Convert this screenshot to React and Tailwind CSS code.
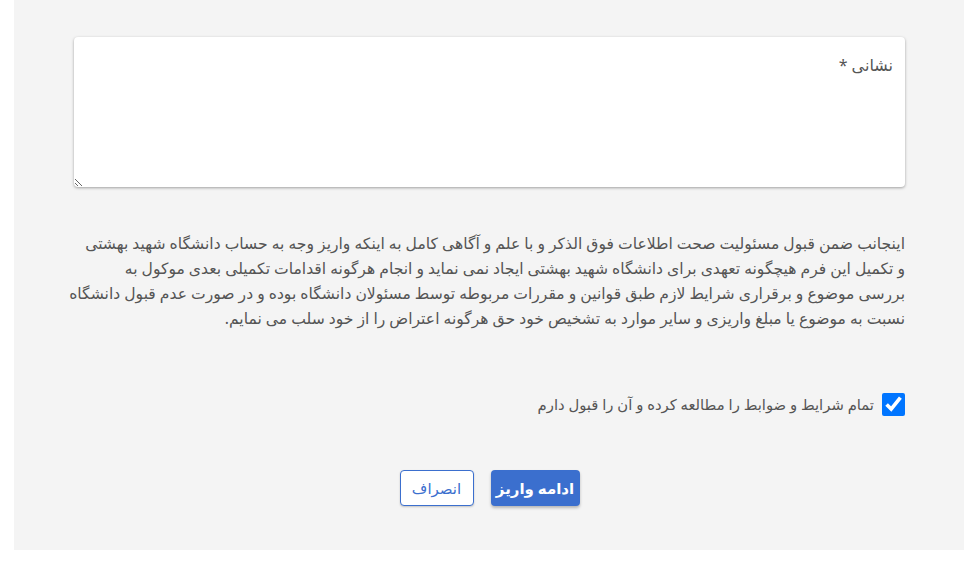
export default function App() {
  return (
    <div className="bg-white w-[975px] h-[562px] font-['Noto_Sans','DejaVu_Sans',sans-serif]" dir="rtl">
      <div className="mr-[11px] w-[950px] h-[550px] bg-[#f4f4f4] pt-[37px] pr-[59px] pl-[60px]">
        <textarea
          placeholder="نشانی *"
          className="block w-full h-[150px] bg-white rounded-[4px] shadow-[0_1px_3px_rgba(0,0,0,0.35)] pt-[16px] pr-[12px] text-[16px] text-[#444] placeholder:text-[#555] outline-none"
        />

        <p className="mt-[44px] text-[15.6px] leading-[25px] text-[#555] text-right whitespace-nowrap">
          اینجانب ضمن قبول مسئولیت صحت اطلاعات فوق الذکر و با علم و آگاهی کامل به اینکه واریز وجه به حساب دانشگاه شهید بهشتی
          <br />
          و تکمیل این فرم هیچگونه تعهدی برای دانشگاه شهید بهشتی ایجاد نمی نماید و انجام هرگونه اقدامات تکمیلی بعدی موکول به
          <br />
          بررسی موضوع و برقراری شرایط لازم طبق قوانین و مقررات مربوطه توسط مسئولان دانشگاه بوده و در صورت عدم قبول دانشگاه
          <br />
          نسبت به موضوع یا مبلغ واریزی و سایر موارد به تشخیص خود حق هرگونه اعتراض را از خود سلب می نمایم.
        </p>

        <label className="mt-[62px] flex items-center gap-[8px] text-[14.8px] text-[#555]">
          <input type="checkbox" defaultChecked className="w-[23px] h-[23px] m-0 accent-[#0075ff]" />
          <span>تمام شرایط و ضوابط را مطالعه کرده و آن را قبول دارم</span>
        </label>

        <div className="mt-[54px] flex justify-center gap-[17px]">
          <button className="w-[89px] h-[36px] rounded-[4px] bg-[#3b6fce] text-white text-[15px] font-bold shadow-[0_2px_3px_rgba(0,0,0,0.25)]">
            ادامه واریز
          </button>
          <button className="w-[74px] h-[36px] rounded-[4px] bg-white border border-[#3b6fce] text-[#3b6fce] text-[15px] shadow-[0_1px_2px_rgba(0,0,0,0.2)]">
            انصراف
          </button>
        </div>
      </div>
    </div>
  );
}
